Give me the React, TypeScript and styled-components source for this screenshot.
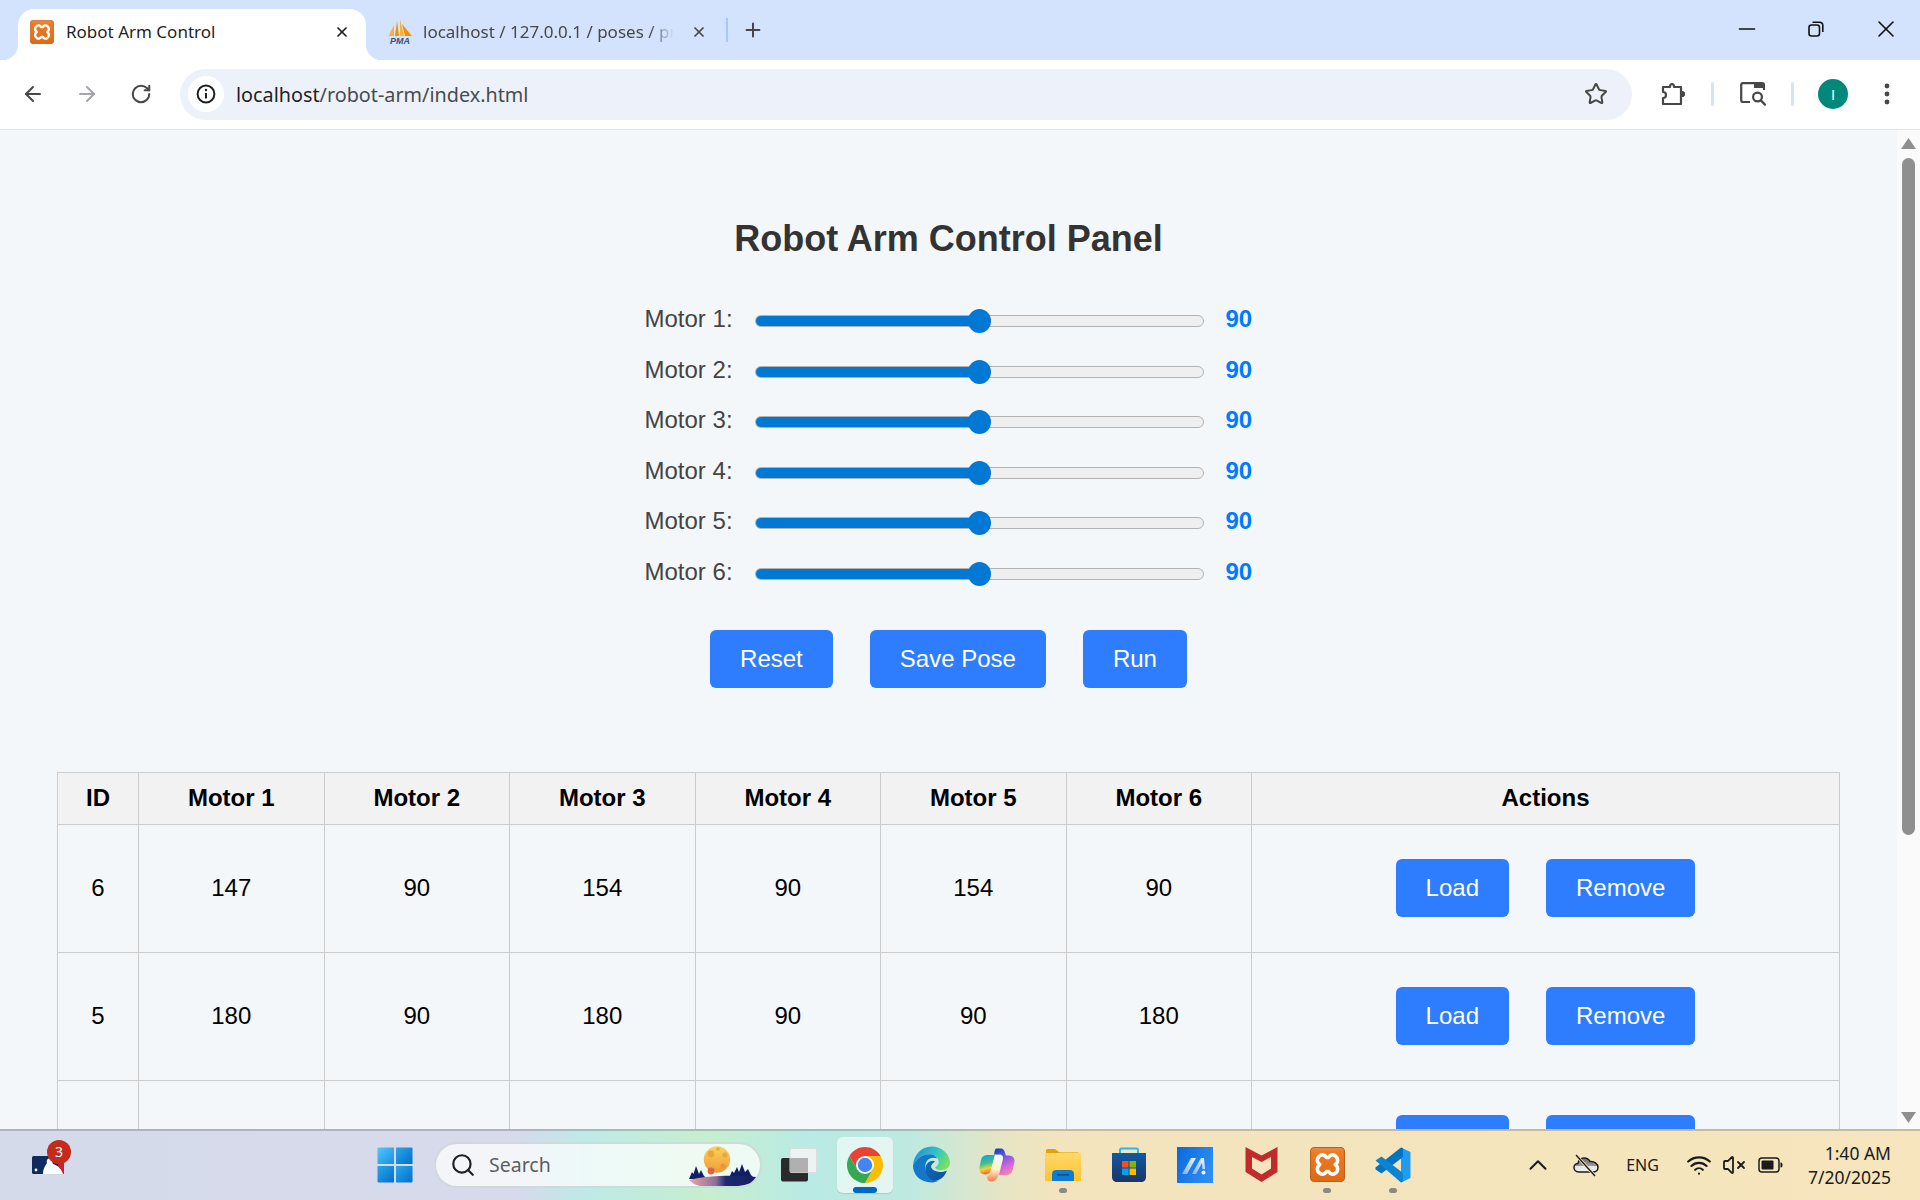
import { useState } from "react";
import styled, { createGlobalStyle } from "styled-components";
import { ArrowLeft, ArrowRight, ChevronUp, Minus, Plus, RotateCw, Search, Star, VolumeX, Wifi, X } from "lucide-react";

const GlobalStyle = createGlobalStyle`
  html, body {
    height: 100%;
    margin: 0;
    overflow: hidden;
  }

  #root {
    height: 100%;
  }

  * {
    box-sizing: border-box;
  }
`;

const UI_FONT = `"Noto Sans", "Open Sans", sans-serif`;
const PAGE_FONT = `"Liberation Sans", Arial, sans-serif`;

const Screen = styled.div`
  height: 1200px;
  display: flex;
  flex-direction: column;
  font-family: ${UI_FONT};
`;

/* browser chrome */
const TabStrip = styled.div`
  height: 60px;
  flex: none;
  display: flex;
  align-items: flex-end;
  padding-left: 18px;
  background: #d3e3fd;
`;

const Tab = styled.div<{ $active?: boolean }>`
  position: relative;
  width: ${(p) => (p.$active ? 348 : 350)}px;
  height: 51px;
  display: flex;
  align-items: center;
  padding: 0 ${(p) => (p.$active ? 16 : 9)}px 6px ${(p) => (p.$active ? 12 : 22)}px;
  gap: ${(p) => (p.$active ? 12 : 11)}px;
  border-radius: 16px 16px 0 0;
  background: ${(p) => (p.$active ? "#ffffff" : "transparent")};
  color: ${(p) => (p.$active ? "#1f1f1f" : "#474747")};

  ${(p) =>
    p.$active &&
    `
    &::before, &::after {
      content: "";
      position: absolute;
      bottom: 0;
      width: 16px;
      height: 16px;
    }
    &::before {
      left: -16px;
      background: radial-gradient(circle at 0 0, transparent 16px, #fff 16.5px);
    }
    &::after {
      right: -16px;
      background: radial-gradient(circle at 100% 0, transparent 16px, #fff 16.5px);
    }
  `}
`;

const TabTitle = styled.span<{ $fade?: boolean }>`
  flex: 1;
  min-width: 0;
  font-size: 17px;
  white-space: nowrap;
  overflow: hidden;
  ${(p) => p.$fade && `mask-image: linear-gradient(to right, #000 90%, transparent);`}
`;

const TabClose = styled.span<{ $dim?: boolean }>`
  width: 16px;
  display: flex;
  justify-content: center;
  margin-left: ${(p) => (p.$dim ? 6 : 0)}px;
  color: ${(p) => (p.$dim ? "#474747" : "#1f1f1f")};
`;

const StripDivider = styled.span`
  width: 2px;
  height: 24px;
  margin: 0 0 18px 10px;
  background: #a8c7fa;
`;

const NewTab = styled.span`
  width: 30px;
  margin: 0 0 19px 10px;
  display: flex;
  justify-content: center;
  color: #444746;
`;

const WindowButtons = styled.div`
  margin-left: auto;
  align-self: stretch;
  display: flex;
`;

const WindowButton = styled.span`
  width: 69.5px;
  display: flex;
  align-items: center;
  justify-content: center;
  color: #111;
  padding: 0 0 2px 1px;
`;

const Toolbar = styled.div`
  height: 70px;
  flex: none;
  display: flex;
  align-items: center;
  padding: 0 0 1px 6px;
  background: #ffffff;
  border-bottom: 1px solid #e1e3e6;
`;

const NavButton = styled.span<{ $off?: boolean }>`
  width: 54px;
  display: flex;
  justify-content: center;
  color: ${(p) => (p.$off ? "#a3a5a8" : "#474747")};
`;

const Omnibox = styled.div`
  width: 1452px;
  height: 51px;
  margin-left: 12px;
  display: flex;
  align-items: center;
  padding: 0 24px 0 8px;
  border-radius: 26px;
  background: #edf2fa;
`;

const InfoChip = styled.span`
  width: 36px;
  height: 36px;
  border-radius: 50%;
  background: #ffffff;
  display: flex;
  align-items: center;
  justify-content: center;
`;

const Url = styled.span`
  margin-left: 12px;
  font-size: 19.8px;
  color: #474b50;

  b {
    font-weight: 400;
    color: #1f1f1f;
  }
`;

const BookmarkStar = styled.span`
  margin-left: auto;
  display: flex;
  color: #474747;
`;

const ToolSlot = styled.span<{ $gap: number }>`
  width: 40px;
  margin-left: ${(p) => p.$gap}px;
  display: flex;
  justify-content: center;
  color: #474747;
`;

const ToolDivider = styled.span`
  width: 3px;
  height: 24px;
  margin-left: 18px;
  border-radius: 2px;
  background: #d3e3fd;
`;

const Avatar = styled.span`
  width: 30px;
  height: 30px;
  border-radius: 50%;
  background: #00897b;
  color: #ffffff;
  font-family: ${PAGE_FONT};
  font-size: 15px;
  display: flex;
  align-items: center;
  justify-content: center;
`;

/* page */
const Viewport = styled.div`
  flex: 1;
  min-height: 0;
  display: flex;
  overflow: hidden;
  background: #f4f7fa;
`;

const Page = styled.main`
  flex: 1;
  min-width: 0;
  padding: 88px 57px 40px;
  font-family: ${PAGE_FONT};
`;

const Title = styled.h1`
  margin: 0;
  text-align: center;
  font-size: 36px;
  line-height: 42px;
  font-weight: 700;
  color: #333333;
`;

const Sliders = styled.div`
  width: 608px;
  margin: 44px auto 0;
  display: flex;
  flex-direction: column;
  gap: 20.5px;
`;

const SliderRow = styled.label`
  height: 30px;
  display: flex;
  align-items: center;
`;

const SliderLabel = styled.span`
  width: 110px;
  font-size: 24px;
  color: #444444;
`;

const Slider = styled.input<{ $pct: number }>`
  appearance: none;
  width: 449px;
  height: 12px;
  margin: 4px 0 0;
  border: 1px solid #b2b2b2;
  border-radius: 6px;
  background: linear-gradient(to right, #0078d4 ${(p) => p.$pct}%, #efefef ${(p) => p.$pct}%);

  &::-webkit-slider-thumb {
    appearance: none;
    width: 23px;
    height: 24px;
    border-radius: 50%;
    background: #0078d4;
  }
`;

const SliderValue = styled.span`
  margin-left: 22px;
  font-size: 24px;
  font-weight: 700;
  color: #007bff;
`;

const Actions = styled.div`
  margin-top: 43px;
  display: flex;
  justify-content: center;
  gap: 37px;
`;

const Button = styled.button`
  height: 58px;
  padding: 0 30px;
  border: 0;
  border-radius: 6px;
  background: #2e7dff;
  color: #ffffff;
  font-family: ${PAGE_FONT};
  font-size: 24px;
  cursor: pointer;
`;

const Table = styled.table`
  width: 100%;
  margin-top: 84px;
  border-collapse: collapse;
  table-layout: fixed;
  font-size: 24px;
  color: #000000;
`;

const HeadCell = styled.th<{ $width?: number }>`
  height: 52px;
  width: ${(p) => (p.$width ? `${p.$width}px` : "auto")};
  padding: 0;
  border: 1px solid #cccccc;
  background: #f2f2f2;
  font-weight: 700;
  text-align: center;
`;

const Cell = styled.td`
  height: 128px;
  padding: 0;
  border: 1px solid #cccccc;
  text-align: center;
`;

const RowActions = styled.div`
  display: flex;
  justify-content: center;
  gap: 37px;
`;

const ScrollBar = styled.div`
  width: 23px;
  flex: none;
  display: flex;
  flex-direction: column;
  align-items: center;
  padding: 8px 0 6px;
  background: #fafafa;
`;

const ScrollThumb = styled.div`
  width: 13px;
  height: 677px;
  margin-top: 9px;
  border-radius: 7px;
  background: #8f8f8f;
`;

const ScrollArrow = styled.svg<{ $down?: boolean }>`
  flex: none;
  ${(p) => p.$down && `margin-top: auto; transform: rotate(180deg);`}
`;

/* taskbar */
const Taskbar = styled.footer`
  height: 71px;
  flex: none;
  display: flex;
  align-items: center;
  padding-bottom: 2px;
  border-top: 2px solid rgba(90, 90, 90, 0.3);
  background: linear-gradient(
    to right,
    #d5daea 0,
    #d6daea 27%,
    #bdeae6 30.5%,
    #c6eecf 37%,
    #b9eae4 42%,
    #bfe9e0 47.5%,
    #e5e5c5 52%,
    #f3e4bd 55%,
    #f6e5bd 100%
  );
`;

const NewsSlot = styled.div`
  position: relative;
  width: 362px;
  padding-left: 32px;
  display: flex;
  flex: none;
`;

const NewsBadge = styled.span`
  position: absolute;
  left: 47px;
  top: -16px;
  width: 24px;
  height: 24px;
  border-radius: 50%;
  background: #c42b1c;
  color: #ffffff;
  font-size: 14px;
  line-height: 24px;
  text-align: center;
`;

const TaskIcon = styled.div<{ $active?: boolean; $open?: boolean }>`
  position: relative;
  width: 66px;
  height: 56px;
  flex: none;
  display: flex;
  align-items: center;
  justify-content: center;
  border-radius: 6px;
  ${(p) => p.$active && `background: rgba(255, 255, 255, 0.58); box-shadow: 0 1px 1px rgba(0,0,0,.12); margin: 0 5px; width: 56px;`}

  &::after {
    content: "";
    display: ${(p) => (p.$open || p.$active ? "block" : "none")};
    position: absolute;
    left: 50%;
    bottom: 0;
    transform: translateX(-50%);
    width: ${(p) => (p.$active ? 24 : 8)}px;
    height: ${(p) => (p.$active ? 6 : 5)}px;
    border-radius: 3px;
    background: ${(p) => (p.$active ? "#0067c0" : "#8a8a80")};
  }
`;

const SearchPill = styled.div`
  width: 328px;
  height: 46px;
  margin: 0 4px 0 6px;
  flex: none;
  display: flex;
  align-items: center;
  padding: 0 0 0 14px;
  border: 2px solid rgba(170, 190, 190, 0.5);
  border-radius: 24px;
  background: rgba(255, 255, 255, 0.72);
  color: #5d5d5d;
  font-size: 19.5px;
`;

const SearchLabel = styled.span`
  margin-left: 13px;
`;

const SearchArt = styled.svg`
  margin-left: auto;
`;

const Tray = styled.div`
  margin-left: auto;
  display: flex;
  align-items: center;
  color: #1b1b1b;
`;

const TrayIcon = styled.span<{ $gap: number }>`
  margin-left: ${(p) => p.$gap}px;
  display: flex;
`;

const TrayText = styled.span`
  margin-left: 27px;
  font-size: 16px;
`;

const Clock = styled.div`
  margin: 0 29px 0 25px;
  text-align: right;
  font-size: 17.5px;
  line-height: 24px;
`;

/* drawings */
function XamppLogo({ size }: { size: number }) {
  return (
    <svg width={size} height={size} viewBox="0 0 32 32">
      <defs>
        <linearGradient id="xampp-bg" x1="0" y1="0" x2="0" y2="1">
          <stop offset="0" stopColor="#e98a4a" />
          <stop offset="0.15" stopColor="#f07a22" />
          <stop offset="1" stopColor="#df6a16" />
        </linearGradient>
      </defs>
      <rect x="0.5" y="0.5" width="31" height="31" rx="3.5" fill="url(#xampp-bg)" stroke="#b9621f" />
      <path
        d="M9 8 C11 6.5 13.5 7 15 9.5 H17 C18.5 7 21 6.5 23 8 C26 10 26 14 23 16 C26 18 26 22 23 24 C21 25.5 18.5 25 17 22.5 H15 C13.5 25 11 25.5 9 24 C6 22 6 18 9 16 C6 14 6 10 9 8 Z"
        fill="none"
        stroke="#fff"
        strokeWidth="3.2"
        strokeLinejoin="round"
      />
    </svg>
  );
}

function PmaLogo() {
  return (
    <svg width="24" height="26" viewBox="0 0 24 26">
      <path d="M0.5 17 L6 6 V17 Z" fill="#f9b233" />
      <path d="M7 17 L9 2 L11 17 Z" fill="#f39200" />
      <path d="M12 17 V0 L16 17 Z" fill="#f9b233" />
      <path d="M17 17 L14 5 L24 17 Z" fill="#f39200" />
      <text x="12" y="25" textAnchor="middle" fontFamily={PAGE_FONT} fontSize="9" fontWeight="700" fontStyle="italic" fill="#3d4f7c">
        PMA
      </text>
    </svg>
  );
}

function InfoIcon() {
  return (
    <svg width="20" height="20" viewBox="0 0 20 20" fill="none" stroke="#1f1f1f" strokeWidth="2">
      <circle cx="10" cy="10" r="8.4" />
      <path d="M10 9 V14.5" />
      <circle cx="10" cy="6" r="1.2" fill="#1f1f1f" stroke="none" />
    </svg>
  );
}

function RestoreIcon() {
  return (
    <svg width="16" height="16" viewBox="0 0 16 16" fill="none" stroke="#111" strokeWidth="1.6">
      <rect x="1" y="4" width="10.5" height="11" rx="2.5" />
      <path d="M4.5 1.2 H11.5 C13.5 1.2 14.8 2.5 14.8 4.5 V11" />
    </svg>
  );
}

function PuzzleIcon() {
  return (
    <svg width="26" height="26" viewBox="0 0 26 26" fill="none" stroke="#474747" strokeWidth="2.2" strokeLinejoin="round">
      <path d="M3 6 H10 C10 2 14 2 14 6 H21 V11 C25 11 25 15 21 15 V23 H3 V17 C7 17 7 11 3 11 Z" />
      <path d="M21 11 C25 11 25 15 21 15 Z" fill="#474747" />
    </svg>
  );
}

function TabSearchIcon() {
  return (
    <svg width="26" height="24" viewBox="0 0 26 24" fill="none" stroke="#474747" strokeWidth="2.2">
      <path d="M10 20 H3 C2 20 1.2 19 1.2 18 V3 C1.2 2 2 1.2 3 1.2 H22 C23.2 1.2 24 2 24 3 V8" />
      <path d="M14 1 H24 V6 H14 Z" fill="#474747" stroke="none" />
      <circle cx="17.5" cy="15" r="4.4" />
      <path d="M20.8 18.4 L25 22.6" strokeLinecap="round" />
    </svg>
  );
}

function DotsIcon() {
  return (
    <svg width="6" height="22" viewBox="0 0 6 22" fill="#474747">
      <circle cx="3" cy="3" r="2.4" />
      <circle cx="3" cy="11" r="2.4" />
      <circle cx="3" cy="19" r="2.4" />
    </svg>
  );
}

function MlbIcon() {
  return (
    <svg width="32" height="18" viewBox="0 0 32 18">
      <rect width="32" height="18" rx="1.5" fill="#0f2a5c" />
      <path d="M26 0 H30.5 A1.5 1.5 0 0 1 32 1.5 V16.5 A1.5 1.5 0 0 1 30.5 18 H26 Z" fill="#c8202f" />
      <path d="M11 18 C11 12 14 9 15 7 C14 4 16 2 18 2.5 C21 3 20 6 21 8 C25 9 29 12 31 18 Z" fill="#fff" />
      <circle cx="4" cy="14" r="1.4" fill="#fff" />
    </svg>
  );
}

function WindowsLogo() {
  return (
    <svg width="36" height="36" viewBox="0 0 36 36">
      <defs>
        <linearGradient id="win-a" x1="0" y1="0" x2="1" y2="1">
          <stop offset="0" stopColor="#52c8fa" />
          <stop offset="1" stopColor="#1a8fe3" />
        </linearGradient>
        <linearGradient id="win-b" x1="0" y1="0" x2="1" y2="1">
          <stop offset="0" stopColor="#2ba5ea" />
          <stop offset="1" stopColor="#0071cc" />
        </linearGradient>
      </defs>
      <path d="M1.5 0.5 H17 V17 H0.5 V1.5 A1 1 0 0 1 1.5 0.5 Z" fill="url(#win-a)" />
      <path d="M19 0.5 H34.5 A1 1 0 0 1 35.5 1.5 V17 H19 Z" fill="url(#win-b)" />
      <path d="M0.5 19 H17 V35.5 H1.5 A1 1 0 0 1 0.5 34.5 Z" fill="url(#win-b)" />
      <path d="M19 19 H35.5 V34.5 A1 1 0 0 1 34.5 35.5 H19 Z" fill="url(#win-b)" />
    </svg>
  );
}

function MoonArt() {
  return (
    <SearchArt width="72" height="44" viewBox="0 0 72 44">
      <defs>
        <linearGradient id="moon" x1="0" y1="0" x2="0" y2="1">
          <stop offset="0" stopColor="#fbd45a" />
          <stop offset="1" stopColor="#f09a3a" />
        </linearGradient>
        <linearGradient id="shore" x1="0" y1="0" x2="1" y2="0">
          <stop offset="0" stopColor="#e8a8a0" />
          <stop offset="0.4" stopColor="#8c6f9c" />
          <stop offset="0.55" stopColor="#1c2a72" />
          <stop offset="1" stopColor="#141f5e" />
        </linearGradient>
      </defs>
      <circle cx="29" cy="16.5" r="13.2" fill="url(#moon)" />
      <circle cx="23" cy="11" r="3.4" fill="#eaa83c" />
      <circle cx="35" cy="23" r="2.6" fill="#e79540" />
      <circle cx="37" cy="12" r="2.6" fill="#eaa83c" />
      <circle cx="30" cy="6" r="1.8" fill="#eaa83c" />
      <circle cx="23" cy="28" r="3.4" fill="#e0604c" />
      <path d="M1 36 L4 29 L5.5 31 L8 23 L11 31 L13 27 L16 33 L20 36 Z" fill="#111f68" />
      <path d="M41 35 L44 28 L46 30 L49 24 L51 29 L54 21 L57 29 L60 26 L63 32 L66 35 Z" fill="#111f68" />
      <path d="M1 37 C20 32 50 32 68 34 C64 40 60 42 50 43 H12 C7 42 4 40 1 37 Z" fill="url(#shore)" />
    </SearchArt>
  );
}

function TaskViewIcon() {
  return (
    <svg width="36" height="34" viewBox="0 0 36 34">
      <rect x="0" y="10" width="27" height="23.5" rx="2" fill="#2a2a2a" />
      <rect x="9" y="0.5" width="26.5" height="24" rx="1.5" fill="#f5f5f5" fillOpacity="0.85" stroke="#dddddd" />
      <rect x="9" y="10" width="18" height="14.5" fill="#b0b0b0" />
    </svg>
  );
}

function ChromeIcon() {
  return (
    <svg width="36" height="36" viewBox="4 4 40 40">
      <path d="M6.68 14 A20 20 0 0 1 41.32 14 L24 14 L15.34 29 Z" fill="#ea4335" />
      <path d="M41.32 14 A20 20 0 0 1 24 44 L32.66 29 L24 14 Z" fill="#fbbc04" />
      <path d="M24 44 A20 20 0 0 1 6.68 14 L15.34 29 L32.66 29 Z" fill="#34a853" />
      <circle cx="24" cy="24" r="10" fill="#fff" />
      <circle cx="24" cy="24" r="8" fill="#4285f4" />
    </svg>
  );
}

function EdgeIcon() {
  return (
    <svg width="37" height="37" viewBox="0 0 36 36">
      <defs>
        <linearGradient id="edge-a" x1="0" y1="0.2" x2="1" y2="0.6">
          <stop offset="0" stopColor="#1f8fd8" />
          <stop offset="0.55" stopColor="#30c4c4" />
          <stop offset="1" stopColor="#7be061" />
        </linearGradient>
        <linearGradient id="edge-b" x1="0" y1="0" x2="1" y2="1">
          <stop offset="0" stopColor="#0d6fbd" />
          <stop offset="1" stopColor="#0c4f9c" />
        </linearGradient>
      </defs>
      <path
        d="M18 0.5 C28 0.5 36 8 36 16 C36 21 31.5 23.5 27 23.5 C23.5 23.5 21.5 22 21.5 21 C21.5 20 25 19.5 25 15.5 C25 11 20.5 8 15.5 8 C8 8 3 13 0 19 C0.5 9 8 0.5 18 0.5 Z"
        fill="url(#edge-a)"
      />
      <path
        d="M0 19 C3 13 8 8 15.5 8 C19 8 22.5 9.5 23.5 12 C17 10 11 14 12 22 C12.8 29 20 35 25 33.8 C22.5 35 20 35.5 18 35.5 C7 35.5 0 28 0 19 Z"
        fill="#1577c9"
      />
      <path
        d="M12 22 C12.5 16 18 13 21.5 15 C20 16.5 16.5 18 18 21.5 C19.5 25 26 26.5 33 24 C30.5 30.5 26 33 22.5 33.8 C17 34.5 11.5 28 12 22 Z"
        fill="url(#edge-b)"
      />
    </svg>
  );
}

function CopilotIcon() {
  return (
    <svg width="36" height="34" viewBox="0 0 36 34">
      <defs>
        <linearGradient id="cop-a" x1="0.2" y1="0" x2="0.4" y2="1">
          <stop offset="0" stopColor="#0fa0ea" />
          <stop offset="0.45" stopColor="#3fc08a" />
          <stop offset="0.72" stopColor="#f5d03a" />
          <stop offset="1" stopColor="#f7602c" />
        </linearGradient>
        <linearGradient id="cop-b" x1="0.3" y1="0" x2="0.7" y2="1">
          <stop offset="0" stopColor="#1746c8" />
          <stop offset="0.35" stopColor="#7a58e8" />
          <stop offset="0.7" stopColor="#d868d8" />
          <stop offset="1" stopColor="#f58aa0" />
        </linearGradient>
        <linearGradient id="cop-c" x1="0" y1="0" x2="0" y2="1">
          <stop offset="0" stopColor="#f2fbff" />
          <stop offset="0.55" stopColor="#fff1c8" />
          <stop offset="1" stopColor="#f9774a" />
        </linearGradient>
      </defs>
      <path d="M2 12 C3 8 6 7 9 7 H16 L12 22 C11 25 9 26.5 6 26.5 C1.5 26.5 -0.5 22.5 0.5 19 Z" fill="url(#cop-a)" />
      <path d="M17 0.5 H22 C24 0.5 25.5 2 26 5 L27 7.5 H30 C34 7.5 36 10.5 35.5 14 L33.5 22.5 C32.5 25.5 30 27 27 27 H20 L24 11 C24.5 8 23 6.5 21 6.5 H15 C15.5 3 16 1 17 0.5 Z" fill="url(#cop-b)" />
      <path d="M12 22 L16 7 H21 C23 7 24 8.5 23.5 11 L19.5 27 C18.5 31 16 33.5 12 33.5 C9 33.5 7.5 30.5 8.5 28 C10.5 27 11.5 24.5 12 22 Z" fill="url(#cop-c)" />
    </svg>
  );
}

function ExplorerIcon() {
  return (
    <svg width="36" height="34" viewBox="0 0 36 34">
      <defs>
        <linearGradient id="folder" x1="0" y1="0" x2="0" y2="1">
          <stop offset="0" stopColor="#ffd968" />
          <stop offset="1" stopColor="#fcc32f" />
        </linearGradient>
      </defs>
      <path d="M1 3 C1 1.5 2 1 3 1 H10 L14 4 H33 V10 H1 Z" fill="#e0a30c" />
      <path d="M0 5 H16 L13 4.5 H35 C35.5 4.5 36 5 36 6 V33 H0 Z" fill="url(#folder)" />
      <path d="M7 33 V26 C7 23 9 22 11 22 H25 C27 22 29 23 29 26 V33 Z" fill="#0f7cd3" />
      <rect x="12" y="26" width="12" height="1.6" fill="#0b4f8c" />
    </svg>
  );
}

function StoreIcon() {
  return (
    <svg width="36" height="36" viewBox="0 0 36 36">
      <defs>
        <linearGradient id="store" x1="0" y1="0" x2="0" y2="1">
          <stop offset="0" stopColor="#0f5aa3" />
          <stop offset="1" stopColor="#1d3563" />
        </linearGradient>
      </defs>
      <path d="M9 8 V3 C9 2 9.5 1.5 10.5 1.5 H25.5 C26.5 1.5 27 2 27 3 V8" fill="none" stroke="#2bb8ee" strokeWidth="2" />
      <path d="M1 6 H35 V30 C35 33 33 35 30 35 H6 C3 35 1 33 1 30 Z" fill="url(#store)" />
      <rect x="11" y="14" width="6.5" height="6.5" fill="#f25022" />
      <rect x="18.5" y="14" width="6.5" height="6.5" fill="#7fba00" />
      <rect x="11" y="21.5" width="6.5" height="6.5" fill="#00a4ef" />
      <rect x="18.5" y="21.5" width="6.5" height="6.5" fill="#ffb900" />
    </svg>
  );
}

function AppMIcon() {
  return (
    <svg width="36" height="36" viewBox="0 0 36 36">
      <defs>
        <linearGradient id="appm" x1="0" y1="0" x2="1" y2="0.4">
          <stop offset="0" stopColor="#0a68e0" />
          <stop offset="1" stopColor="#2d8cf0" />
        </linearGradient>
        <linearGradient id="appm-s" x1="0" y1="1" x2="1" y2="0">
          <stop offset="0" stopColor="#7fb2f2" />
          <stop offset="1" stopColor="#f0f6ff" />
        </linearGradient>
      </defs>
      <rect width="36" height="36" fill="url(#appm)" />
      <path d="M5 27 L14 11 H19 L10 27 Z" fill="url(#appm-s)" />
      <path d="M15 27 L24 11 H27 L28 22 H25.5 L25 16 L19 27 Z" fill="url(#appm-s)" />
      <circle cx="26.5" cy="25.5" r="2" fill="#fff" />
    </svg>
  );
}

function McAfeeIcon() {
  return (
    <svg width="33" height="37" viewBox="0 0 33 37">
      <path
        d="M0.5 1 L16.5 9.5 L32.5 1 V26 L16.5 36 L0.5 26 Z M7 11 V22.5 L16.5 28.5 L26 22.5 V11 L16.5 16 Z"
        fill="#c02c2c"
        fillRule="evenodd"
      />
    </svg>
  );
}

function VsCodeIcon() {
  return (
    <svg width="36" height="36" viewBox="0 0 36 36">
      <path d="M26 0.5 L35.5 5 V31 L26 35.5 Z" fill="#1f9cf0" />
      <path d="M26 0.5 L28 1.5 V10 L6.5 26.5 L0.5 22.5 V20.5 Z" fill="#0074c0" />
      <path d="M0.5 13.5 L6.5 9.5 L28 26 V34.5 L26 35.5 Z" fill="#0a85d6" />
    </svg>
  );
}

function CloudOffIcon() {
  return (
    <svg width="26" height="24" viewBox="0 0 26 24">
      <defs>
        <linearGradient id="cloud" x1="0" y1="0" x2="0" y2="1">
          <stop offset="0" stopColor="#6d6d6d" />
          <stop offset="0.55" stopColor="#9a9a9a" />
          <stop offset="0.6" stopColor="#e4e4e4" />
          <stop offset="1" stopColor="#f2f2f2" />
        </linearGradient>
      </defs>
      <path d="M6 19 C2 19 1 16 1 14.5 C1 11.5 3.5 10.5 5 10.5 C5.5 7 8 5 11 5 C14 5 16 6.5 17 8.5 C21 8 25 10.5 25 14.5 C25 17 23 19 20 19 Z" fill="url(#cloud)" stroke="#1b1b1b" strokeWidth="1.5" />
      <path d="M3 2 L22 23" stroke="#f6e5bd" strokeWidth="3" />
      <path d="M3 2 L22 23" stroke="#1b1b1b" strokeWidth="1.4" />
    </svg>
  );
}

function BatteryIcon() {
  return (
    <svg width="25" height="16" viewBox="0 0 25 16" fill="none">
      <rect x="1" y="1" width="20" height="14" rx="3" stroke="#1b1b1b" strokeWidth="1.5" />
      <rect x="3.5" y="3.5" width="12" height="9" rx="1" fill="#1b1b1b" />
      <path d="M22.5 5.5 H23 C24 5.5 24.5 6.5 24.5 8 C24.5 9.5 24 10.5 23 10.5 H22.5 Z" fill="#1b1b1b" />
    </svg>
  );
}

type Pose = { id: number; motors: number[] };

const INITIAL_POSES: Pose[] = [
  { id: 6, motors: [147, 90, 154, 90, 154, 90] },
  { id: 5, motors: [180, 90, 180, 90, 90, 180] },
  { id: 4, motors: [90, 90, 90, 90, 90, 90] },
];

export default function App() {
  const [motors, setMotors] = useState([90, 90, 90, 90, 90, 90]);
  const [poses, setPoses] = useState(INITIAL_POSES);

  const setMotor = (index: number, value: number) => {
    setMotors((prev) => prev.map((m, i) => (i === index ? value : m)));
  };

  return (
    <Screen>
      <GlobalStyle />
      <TabStrip>
        <Tab $active>
          <XamppLogo size={24} />
          <TabTitle>Robot Arm Control</TabTitle>
          <TabClose>
            <X size={20} strokeWidth={2.6} />
          </TabClose>
        </Tab>
        <Tab>
          <PmaLogo />
          <TabTitle $fade>localhost / 127.0.0.1 / poses / pma_table_structure</TabTitle>
          <TabClose $dim>
            <X size={20} strokeWidth={2.6} />
          </TabClose>
        </Tab>
        <StripDivider />
        <NewTab>
          <Plus size={22} strokeWidth={2.2} />
        </NewTab>
        <WindowButtons>
          <WindowButton>
            <Minus size={26} strokeWidth={1.4} />
          </WindowButton>
          <WindowButton>
            <RestoreIcon />
          </WindowButton>
          <WindowButton>
            <X size={28} strokeWidth={1.4} />
          </WindowButton>
        </WindowButtons>
      </TabStrip>

      <Toolbar>
        <NavButton>
          <ArrowLeft size={24} strokeWidth={2} />
        </NavButton>
        <NavButton $off>
          <ArrowRight size={24} strokeWidth={2} />
        </NavButton>
        <NavButton>
          <RotateCw size={22} strokeWidth={2.2} />
        </NavButton>
        <Omnibox>
          <InfoChip>
            <InfoIcon />
          </InfoChip>
          <Url>
            <b>localhost</b>/robot-arm/index.html
          </Url>
          <BookmarkStar>
            <Star size={24} strokeWidth={2} />
          </BookmarkStar>
        </Omnibox>
        <ToolSlot $gap={21}>
          <PuzzleIcon />
        </ToolSlot>
        <ToolDivider />
        <ToolSlot $gap={19}>
          <TabSearchIcon />
        </ToolSlot>
        <ToolDivider />
        <ToolSlot $gap={19}>
          <Avatar>I</Avatar>
        </ToolSlot>
        <ToolSlot $gap={14}>
          <DotsIcon />
        </ToolSlot>
      </Toolbar>

      <Viewport>
        <Page>
          <Title>Robot Arm Control Panel</Title>
          <Sliders>
            {motors.map((value, i) => (
              <SliderRow key={i}>
                <SliderLabel>Motor {i + 1}:</SliderLabel>
                <Slider
                  type="range"
                  min={0}
                  max={180}
                  value={value}
                  $pct={(value / 180) * 100}
                  onChange={(e) => setMotor(i, Number(e.target.value))}
                />
                <SliderValue>{value}</SliderValue>
              </SliderRow>
            ))}
          </Sliders>
          <Actions>
            <Button onClick={() => setMotors([90, 90, 90, 90, 90, 90])}>Reset</Button>
            <Button>Save Pose</Button>
            <Button>Run</Button>
          </Actions>
          <Table>
            <thead>
              <tr>
                <HeadCell $width={81}>ID</HeadCell>
                {[1, 2, 3, 4, 5, 6].map((n) => (
                  <HeadCell key={n} $width={185.5}>
                    Motor {n}
                  </HeadCell>
                ))}
                <HeadCell>Actions</HeadCell>
              </tr>
            </thead>
            <tbody>
              {poses.map((pose) => (
                <tr key={pose.id}>
                  <Cell>{pose.id}</Cell>
                  {pose.motors.map((m, i) => (
                    <Cell key={i}>{m}</Cell>
                  ))}
                  <Cell>
                    <RowActions>
                      <Button onClick={() => setMotors(pose.motors)}>Load</Button>
                      <Button onClick={() => setPoses((prev) => prev.filter((p) => p.id !== pose.id))}>Remove</Button>
                    </RowActions>
                  </Cell>
                </tr>
              ))}
            </tbody>
          </Table>
        </Page>
        <ScrollBar>
          <ScrollArrow width="15" height="11" viewBox="0 0 15 11">
            <path d="M7.5 0 L15 11 H0 Z" fill="#8f8f8f" />
          </ScrollArrow>
          <ScrollThumb />
          <ScrollArrow $down width="15" height="11" viewBox="0 0 15 11">
            <path d="M7.5 0 L15 11 H0 Z" fill="#8f8f8f" />
          </ScrollArrow>
        </ScrollBar>
      </Viewport>

      <Taskbar>
        <NewsSlot>
          <MlbIcon />
          <NewsBadge>3</NewsBadge>
        </NewsSlot>
        <TaskIcon>
          <WindowsLogo />
        </TaskIcon>
        <SearchPill>
          <Search size={26} strokeWidth={2} color="#1f1f1f" />
          <SearchLabel>Search</SearchLabel>
          <MoonArt />
        </SearchPill>
        <TaskIcon>
          <TaskViewIcon />
        </TaskIcon>
        <TaskIcon $active>
          <ChromeIcon />
        </TaskIcon>
        <TaskIcon>
          <EdgeIcon />
        </TaskIcon>
        <TaskIcon>
          <CopilotIcon />
        </TaskIcon>
        <TaskIcon $open>
          <ExplorerIcon />
        </TaskIcon>
        <TaskIcon>
          <StoreIcon />
        </TaskIcon>
        <TaskIcon>
          <AppMIcon />
        </TaskIcon>
        <TaskIcon>
          <McAfeeIcon />
        </TaskIcon>
        <TaskIcon $open>
          <XamppLogo size={35} />
        </TaskIcon>
        <TaskIcon $open>
          <VsCodeIcon />
        </TaskIcon>
        <Tray>
          <TrayIcon $gap={0}>
            <ChevronUp size={30} strokeWidth={1.6} />
          </TrayIcon>
          <TrayIcon $gap={20}>
            <CloudOffIcon />
          </TrayIcon>
          <TrayText>ENG</TrayText>
          <TrayIcon $gap={27}>
            <Wifi size={26} strokeWidth={2} />
          </TrayIcon>
          <TrayIcon $gap={10}>
            <VolumeX size={24} strokeWidth={1.8} />
          </TrayIcon>
          <TrayIcon $gap={12}>
            <BatteryIcon />
          </TrayIcon>
          <Clock>
            1:40 AM
            <br />
            7/20/2025
          </Clock>
        </Tray>
      </Taskbar>
    </Screen>
  );
}
